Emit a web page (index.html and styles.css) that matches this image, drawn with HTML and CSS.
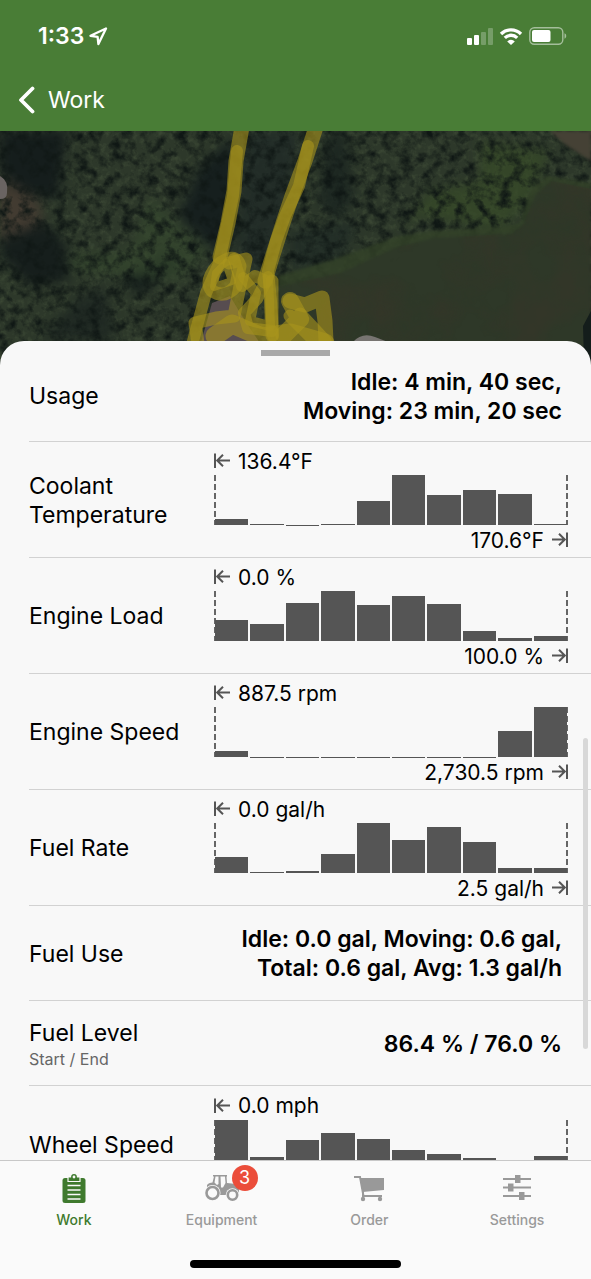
FILE: index.html
```html
<!DOCTYPE html>
<html lang="en">
<head>
  <meta charset="UTF-8">
  <meta name="viewport" content="width=device-width, initial-scale=1">
  <title>Work</title>
  <link rel="stylesheet" href="styles.css">
</head>
<body>

<!-- arrows used by every chart -->
<svg class="defs" width="0" height="0" aria-hidden="true">
  <symbol id="arrow-start" viewBox="0 0 17 16">
    <path d="M1 0.5V15M16 7.5H3M9 1.8L3.2 7.5L9 13.2" fill="none" stroke="#555" stroke-width="2"/>
  </symbol>
  <symbol id="arrow-end" viewBox="0 0 17 16">
    <path d="M16 0.5V15M1 7.5H14M8 1.8L13.8 7.5L8 13.2" fill="none" stroke="#555" stroke-width="2"/>
  </symbol>
</svg>

<header class="header">
  <div class="status">
    <span class="time">1:33</span>
    <svg class="location" width="19" height="19" viewBox="0 0 19 19">
      <path d="M17 1.5L1.5 8.8L8.6 9.8L9.4 17Z" fill="none" stroke="#fff" stroke-width="2.3" stroke-linejoin="round"/>
    </svg>
    <div class="status-icons">
      <svg width="27" height="17" viewBox="0 0 27 17" fill="#fff">
        <rect x="1" y="10" width="5" height="7" rx="1"/>
        <rect x="8" y="7" width="5" height="10" rx="1"/>
        <rect x="15" y="4" width="5" height="13" rx="1" opacity="0.25"/>
        <rect x="22" y="0" width="5" height="17" rx="1" opacity="0.25"/>
      </svg>
      <svg width="24" height="17" viewBox="0 0 24 17">
        <path d="M2 6A14.2 14.2 0 0 1 22 6M5.8 9.8A8.8 8.8 0 0 1 18.2 9.8" fill="none" stroke="#fff" stroke-width="3.3"/>
        <path d="M12 17L8.2 13.4A5.4 5.4 0 0 1 15.8 13.4Z" fill="#fff"/>
      </svg>
      <svg width="38" height="18" viewBox="0 0 38 18">
        <rect x="0.8" y="0.8" width="33" height="16.4" rx="4.5" fill="none" stroke="#fff" stroke-opacity="0.5" stroke-width="1.4"/>
        <rect x="3" y="3" width="18.5" height="12" rx="2" fill="#fff"/>
        <path d="M35.5 6.3C37.8 7 37.8 11 35.5 11.7Z" fill="#fff" opacity="0.5"/>
      </svg>
    </div>
  </div>
  <a class="back" href="#work">
    <svg width="17" height="28" viewBox="0 0 17 28">
      <path d="M14.5 2.5L3 14L14.5 25.5" fill="none" stroke="#fff" stroke-width="3.8" stroke-linecap="round" stroke-linejoin="round"/>
    </svg>
    Work
  </a>
</header>

<svg class="map" viewBox="0 0 591 250" preserveAspectRatio="xMidYMin slice" role="img" aria-label="Map" color-interpolation-filters="sRGB">
  <defs>
    <filter id="soft" x="-20%" y="-20%" width="140%" height="140%"><feGaussianBlur stdDeviation="6"/></filter>
    <filter id="edge"><feGaussianBlur stdDeviation="1.5"/></filter>
    <filter id="leaves" x="0" y="0" width="100%" height="100%">
      <feTurbulence type="fractalNoise" baseFrequency="0.09" numOctaves="4" seed="7"/>
      <feColorMatrix values="0 0 0 0 0.06  0 0 0 0 0.09  0 0 0 0 0.08  2.6 0 0 0 -1.1"/>
    </filter>
    <filter id="light" x="0" y="0" width="100%" height="100%">
      <feTurbulence type="fractalNoise" baseFrequency="0.16" numOctaves="3" seed="21"/>
      <feColorMatrix values="0 0 0 0 0.32  0 0 0 0 0.38  0 0 0 0 0.27  0 2 0 0 -0.95"/>
    </filter>
    <filter id="grass" x="0" y="0" width="100%" height="100%">
      <feTurbulence type="fractalNoise" baseFrequency="0.02" numOctaves="4" seed="4"/>
      <feColorMatrix values="0 0 0 0 0.24  0 0 0 0 0.2  0 0 0 0 0.16  1.5 0 0 0 -0.6"/>
    </filter>
    <clipPath id="field"><path d="M278 156L340 142L395 117L435 107L512 103L524 93L536 63L552 50L591 58V250H278Z"/></clipPath>
  </defs>
  <rect width="591" height="250" fill="#2d382a"/>
  <rect width="591" height="250" opacity="0.5" filter="url(#light)"/>
  <!-- tree shadows and clearings -->
  <g filter="url(#soft)">
    <path d="M0 0H68L62 40L58 70L20 60L0 40Z" fill="#151d1c"/>
    <path d="M0 105L45 90L65 110L70 150L30 155L0 125Z" fill="#161e1c"/>
    <path d="M200 35L235 5L235 110L215 122L178 85Z" fill="#161f1e"/>
    <path d="M245 0H300L285 90L260 140L238 130Z" fill="#1f2927" fill-opacity="0.8"/>
    <path d="M328 0H345L355 70L335 90L318 70Z" fill="#19231f" fill-opacity="0.8"/>
    <path d="M120 150L170 120L180 135L140 165Z" fill="#161f1c"/>
    <path d="M80 165L105 155L115 210L40 208Z" fill="#1b2420" fill-opacity="0.8"/>
    <path d="M150 65L180 95L210 120L180 150L70 140L72 122L130 120Z" fill="#35472e" fill-opacity="0.7"/>
    <path d="M480 10L550 20L530 70L500 100L420 85L400 100L430 60L480 50Z" fill="#374c28" fill-opacity="0.7"/>
    <path d="M0 45L40 70L42 92L0 108Z" fill="#423b31"/>
    <path d="M290 100L360 90L340 130L290 140Z" fill="#1e2a25" fill-opacity="0.7"/>
  </g>
  <rect width="591" height="250" filter="url(#leaves)"/>
  <path d="M0 45Q9 50 7 62Q7 68 0 68Z" fill="#6a6462"/>
  <!-- open field -->
  <g filter="url(#edge)">
    <path d="M550 0H591V30L566 14Z" fill="#454135"/>
    <path d="M278 145L335 128L395 106L430 100L500 96L520 92L530 60L547 45L591 52V250H278Z" fill="#334228" fill-opacity="0.8"/>
    <path d="M278 156L340 142L395 117L435 107L512 103L524 93L536 63L552 50L591 58V250H278Z" fill="#2e3828"/>
  </g>
  <g clip-path="url(#field)"><rect width="591" height="250" filter="url(#grass)" opacity="0.6"/></g>
  <path d="M353 211Q362 201 375 206L388 211Z" fill="#777471"/>
  <path d="M591 180L583 195L584 230H591Z" fill="#141d1b"/>
  <path d="M212 172L230 165L245 190L262 215H200Z" fill="#574d50"/>
  <!-- driven tracks -->
  <g fill="none" stroke="#a8951c" stroke-opacity="0.6" stroke-linecap="round" stroke-linejoin="round">
    <path d="M242 -4L236 30L234 60L228 92L220 126" stroke-width="15"/>
    <path d="M237 20L233 65L226 98L218 135L206 162L193 210" stroke-width="12"/>
    <path d="M316 -4L305 30L292 65L283 92L271 130L265 150" stroke-width="15"/>
    <path d="M308 15L299 55L285 85L276 110L268 140L271 170L273 205" stroke-width="12"/>
    <path d="M218 134Q235 120 240 135L236 155Q225 168 212 160Q204 150 218 134Z" stroke-width="13"/>
    <path d="M216 142L226 132L232 150L214 156Z" stroke-width="8"/>
    <path d="M229 132L246 128L240 155L234 185L216 187L195 192L198 212" stroke-width="13"/>
    <path d="M234 128L242 155L255 145L266 150L257 168L244 182L248 197L272 200" stroke-width="12"/>
    <path d="M268 145L270 195L250 190L256 162L243 146" stroke-width="10"/>
    <path d="M272 150L272 205" stroke-width="13"/>
    <path d="M215 205L232 193L262 206L290 202L325 212" stroke-width="19"/>
    <path d="M290 170L300 188L284 204" stroke-width="18"/>
    <path d="M290 170L305 174L322 167L325 190L326 210" stroke-width="15"/>
    <path d="M300 183L325 210M290 185L315 210" stroke-width="13"/>
  </g>
</svg>

<main class="sheet">
  <div class="handle"></div>

  <div class="row usage">
    <div class="label">Usage</div>
    <div class="value">Idle: 4 min, 40 sec,<br>Moving: 23 min, 20 sec</div>
  </div>

  <div class="row">
    <div class="label">Coolant Temperature</div>
    <div class="chart">
      <div class="min"><svg><use href="#arrow-start"/></svg>136.4°F</div>
      <div class="bars">
        <i style="height: 13%"></i><i style="height: 2%"></i><i style="height: 1%"></i><i style="height: 3%"></i><i style="height: 48%"></i>
        <i style="height: 100%"></i><i style="height: 61%"></i><i style="height: 70%"></i><i style="height: 63%"></i><i style="height: 2%"></i>
      </div>
      <div class="max">170.6°F<svg><use href="#arrow-end"/></svg></div>
    </div>
  </div>

  <div class="row">
    <div class="label">Engine Load</div>
    <div class="chart">
      <div class="min"><svg><use href="#arrow-start"/></svg>0.0 %</div>
      <div class="bars">
        <i style="height: 42%"></i><i style="height: 34%"></i><i style="height: 77%"></i><i style="height: 100%"></i><i style="height: 72%"></i>
        <i style="height: 90%"></i><i style="height: 74%"></i><i style="height: 20%"></i><i style="height: 6%"></i><i style="height: 11%"></i>
      </div>
      <div class="max">100.0 %<svg><use href="#arrow-end"/></svg></div>
    </div>
  </div>

  <div class="row">
    <div class="label">Engine Speed</div>
    <div class="chart">
      <div class="min"><svg><use href="#arrow-start"/></svg>887.5 rpm</div>
      <div class="bars">
        <i style="height: 12%"></i><i style="height: 1%"></i><i style="height: 1%"></i><i style="height: 1%"></i><i style="height: 1%"></i>
        <i style="height: 1%"></i><i style="height: 1%"></i><i style="height: 1%"></i><i style="height: 53%"></i><i style="height: 100%"></i>
      </div>
      <div class="max">2,730.5 rpm<svg><use href="#arrow-end"/></svg></div>
    </div>
  </div>

  <div class="row">
    <div class="label">Fuel Rate</div>
    <div class="chart">
      <div class="min"><svg><use href="#arrow-start"/></svg>0.0 gal/h</div>
      <div class="bars">
        <i style="height: 33%"></i><i style="height: 3%"></i><i style="height: 4%"></i><i style="height: 38%"></i><i style="height: 100%"></i>
        <i style="height: 66%"></i><i style="height: 92%"></i><i style="height: 63%"></i><i style="height: 10%"></i><i style="height: 10%"></i>
      </div>
      <div class="max">2.5 gal/h<svg><use href="#arrow-end"/></svg></div>
    </div>
  </div>

  <div class="row fuel-use">
    <div class="label">Fuel Use</div>
    <div class="value">Idle: 0.0 gal, Moving: 0.6 gal,<br>Total: 0.6 gal, Avg: 1.3 gal/h</div>
  </div>

  <div class="row fuel-level">
    <div class="label">Fuel Level<small>Start / End</small></div>
    <div class="value">86.4 % / 76.0 %</div>
  </div>

  <div class="row">
    <div class="label">Wheel Speed</div>
    <div class="chart">
      <div class="min"><svg><use href="#arrow-start"/></svg>0.0 mph</div>
      <div class="bars">
        <i style="height: 100%"></i><i style="height: 26%"></i><i style="height: 59%"></i><i style="height: 73%"></i><i style="height: 61%"></i>
        <i style="height: 39%"></i><i style="height: 31%"></i><i style="height: 23%"></i><i style="height: 16%"></i><i style="height: 27%"></i>
      </div>
      <div class="max"></div>
    </div>
  </div>
</main>
<div class="scroll-thumb"></div>

<nav class="tabs">
  <div class="tab-list">
    <a class="tab active" href="#work">
      <svg width="34" height="32" viewBox="0 0 34 32">
        <path d="M8 5H26Q28.5 5 28.5 7.5V27.5Q28.5 30 26 30H8Q5.5 30 5.5 27.5V7.5Q5.5 5 8 5Z" fill="currentColor"/>
        <path d="M11 4V8.5H23V4H20.5Q20.5 0.5 17 0.5Q13.5 0.5 13.5 4Z" fill="currentColor" stroke="#fafafa" stroke-width="1.2"/>
        <circle cx="17" cy="4" r="1.4" fill="#fafafa"/>
        <path d="M10.5 12.5H23.500M10.500 17H23.500M10.500 21.5H23.500M10.500 26H23.500" stroke="#fafafa" stroke-width="1.7"/>
      </svg>
      Work
    </a>
    <a class="tab" href="#equipment">
      <svg width="34" height="32" viewBox="0 0 34 32">
        <path d="M8 2H22V3.500H21.500L22 10L31 11Q34 12 34 17V22H15L12 16L2 14Q1 10 7.500 9.500L9 3.500H8Z" fill="currentColor"/>
        <path d="M10.500 3.500H13.500V11L12 12L9.500 9.500ZM15.500 3.500H20L20.500 10L18 14.500H16Z" fill="#fafafa"/>
        <circle cx="7.500" cy="20" r="8" fill="#fafafa"/>
        <circle cx="7.500" cy="20" r="6" fill="#fafafa" stroke="currentColor" stroke-width="2.600"/>
        <circle cx="27.500" cy="22" r="6.800" fill="#fafafa"/>
        <circle cx="27.500" cy="22" r="4.700" fill="#fafafa" stroke="currentColor" stroke-width="2.600"/>
      </svg>
      <span class="badge">3</span>
      Equipment
    </a>
    <a class="tab" href="#order">
      <svg width="34" height="32" viewBox="0 0 34 32">
        <path d="M8 5H32V17L10.500 19Z" fill="currentColor"/>
        <path d="M2 4H8L11.500 23H30" fill="none" stroke="currentColor" stroke-width="2"/>
        <circle cx="11" cy="26" r="2.200" fill="currentColor"/>
        <circle cx="28" cy="26" r="2.200" fill="currentColor"/>
        <path d="M11 18V26M28 23V26" stroke="currentColor" stroke-width="2"/>
      </svg>
      Order
    </a>
    <a class="tab" href="#settings">
      <svg width="34" height="32" viewBox="0 0 34 32">
        <path d="M3 6H31M3 14.500H31M3 23H31" stroke="currentColor" stroke-width="2"/>
        <path d="M15 2H20.500V10H15ZM8 10.500H13.500V18.500H8ZM19 19H24.500V27H19Z" fill="currentColor"/>
      </svg>
      Settings
    </a>
  </div>
  <div class="home-bar"></div>
</nav>

</body>
</html>
```

FILE: styles.css
```css
* {
  box-sizing: border-box;
}
body {
  margin: 0;
  height: 100vh;
  display: flex;
  flex-direction: column;
  position: relative;
  overflow: hidden;
  font-family: Inter, "Liberation Sans", sans-serif;
  background: #f8f8f8;
  color: #000;
}
.defs {
  position: absolute;
}

/* Header */
.header {
  flex: none;
  background: #497d36;
  color: white;
  padding: 20px 24px 12px 18px;
}
.status {
  display: flex;
  align-items: center;
  height: 32px;
  padding-left: 20px;
}
.time {
  font-size: 23px;
  font-weight: 600;
}
.location {
  margin-left: 5px;
}
.status-icons {
  margin-left: auto;
  display: flex;
  align-items: center;
  gap: 6px;
}
.back {
  display: flex;
  align-items: center;
  gap: 13px;
  width: max-content;
  margin-top: 29px;
  height: 38px;
  font-size: 23px;
  color: white;
  text-decoration: none;
}

/* Map */
.map {
  flex: none;
  display: block;
  width: 100%;
  height: 250px;
}

/* Sheet */
.sheet {
  flex: 1;
  min-height: 0;
  margin-top: -40px;
  position: relative;
  overflow-y: auto;
  scrollbar-width: none;
  background: #f8f8f8;
  border-radius: 24px 24px 0 0;
}
.handle {
  width: 69px;
  height: 6px;
  margin: 9px auto 0;
  background: #a9a9a9;
}
.row {
  display: flex;
  align-items: center;
  min-height: 116px;
  margin-left: 29px;
  padding-top: 2px;
  padding-right: 23px;
  border-bottom: 1px solid #d2d2d2;
}
.row:last-child {
  border-bottom: none;
}
.usage {
  min-height: 86px;
  padding-bottom: 6px;
}
.fuel-use {
  min-height: 95px;
}
.fuel-level {
  min-height: 85px;
}
.label {
  flex: none;
  width: 185px;
  padding-right: 20px;
  font-size: 23px;
  line-height: 29px;
}
.label small {
  display: block;
  font-size: 16px;
  line-height: 22px;
  color: #666;
}
.value {
  flex: 1;
  padding-right: 6px;
  font-size: 23px;
  line-height: 29px;
  font-weight: 600;
  text-align: right;
  white-space: nowrap;
}
.fuel-use .label,
.fuel-level .label {
  width: 120px;
  padding-right: 0;
}

/* Charts */
.chart {
  flex: 1;
}
.min,
.max {
  display: flex;
  align-items: center;
  gap: 7px;
  height: 24px;
  font-size: 21px;
}
.max {
  justify-content: flex-end;
  margin-top: 3px;
}
.min svg,
.max svg {
  width: 17px;
  height: 16px;
}
.bars {
  display: grid;
  grid-template-columns: repeat(10, 1fr);
  align-items: end;
  gap: 2px;
  height: 50px;
  margin-top: 2px;
  padding: 0 1px;
  background:
    repeating-linear-gradient(#666 0 6px, transparent 6px 9px) left / 2px 100% no-repeat,
    repeating-linear-gradient(#666 0 6px, transparent 6px 9px) right / 2px 100% no-repeat;
}
.bars i {
  background: #555;
}

.scroll-thumb {
  position: absolute;
  right: 3px;
  top: 738px;
  width: 5px;
  height: 311px;
  border-radius: 3px;
  background: #d8d8d8;
}

/* Bottom tabs */
.tabs {
  flex: none;
  height: 119px;
  background: #fafafa;
  border-top: 1px solid #c8c8c8;
}
.tab-list {
  display: flex;
  height: 99px;
}
.tab {
  flex: 1;
  position: relative;
  display: flex;
  flex-direction: column;
  align-items: center;
  gap: 6px;
  padding-top: 12px;
  font-size: 14px;
  line-height: 18px;
  font-weight: 500;
  color: #999;
  text-decoration: none;
}
.tab.active {
  color: #3f7a2e;
}
.badge {
  position: absolute;
  top: 4px;
  left: 50%;
  margin-left: 10px;
  width: 26px;
  height: 26px;
  border-radius: 50%;
  background: #eb4d3a;
  color: white;
  font-size: 18px;
  line-height: 26px;
  font-weight: 400;
  text-align: center;
}
.home-bar {
  width: 211px;
  height: 8px;
  margin: 0 auto;
  border-radius: 4px;
  background: black;
}
```
